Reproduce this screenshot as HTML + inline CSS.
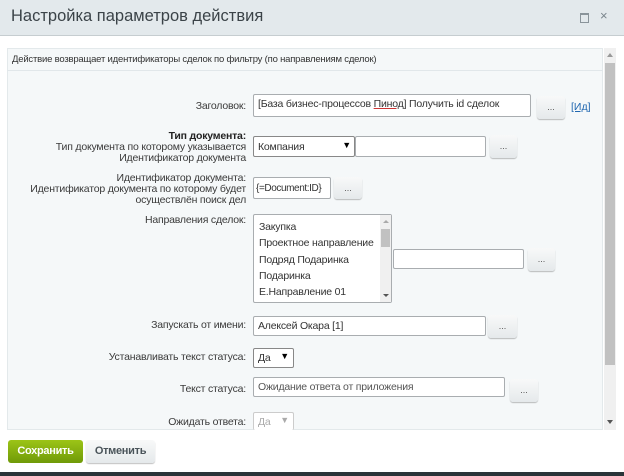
<!DOCTYPE html><html><head><meta charset="utf-8"><style>
body{margin:0;width:624px;height:476px;position:relative;overflow:hidden;background:#fff;font-family:"Liberation Sans",sans-serif;color:#333}
.a{position:absolute}
.lbl{position:absolute;right:378px;text-align:right;font-size:10.5px;color:#3a3a3a;line-height:11px;white-space:nowrap;letter-spacing:-0.2px}
.in{position:absolute;background:#fff;border:1px solid #a9adb0;border-radius:2px;box-sizing:border-box;font-size:10.5px;padding:3px 4px;color:#333;white-space:nowrap;overflow:hidden;letter-spacing:-0.2px}
.btn{position:absolute;box-sizing:border-box;border-radius:3px;background:linear-gradient(#f8f9f9,#e5e9eb);box-shadow:0 1px 1px rgba(0,0,0,.25);font-size:9px;color:#555;text-align:center;line-height:18px}
</style></head><body>
<div class="a" style="left:0;top:0;width:624px;height:35px;background:#e3e9ec;border-bottom:1px solid #c6cdd0"></div>
<div class="a" style="left:11px;top:7px;font-size:16.5px;color:#3b4348">Настройка параметров действия</div>
<div class="a" style="left:580px;top:13px;width:7px;height:7px;border:1px solid #8a949a;border-top-width:2px"></div>
<div class="a" style="left:600px;top:8px;font-size:13px;color:#7a858c">×</div>
<div class="a" style="left:7px;top:48px;width:596px;height:382px;background:#f5f8f9;border:1px solid #e3e9eb;box-sizing:border-box"></div>
<div class="a" style="left:7px;top:70px;width:596px;height:1px;background:#e1e7ea"></div>
<div class="a" style="left:12px;top:54px;font-size:9.5px;color:#333;letter-spacing:-0.2px">Действие возвращает идентификаторы сделок по фильтру (по направлениям сделок)</div>
<div class="a" style="left:604px;top:48px;width:12px;height:382px;background:#f0f0f0"></div>
<div class="a" style="left:607px;top:53px;width:0;height:0;border:3px solid transparent;border-bottom:4px solid #999;border-top:0"></div>
<div class="a" style="left:605px;top:63px;width:10px;height:302px;background:#c1c1c1"></div>
<div class="a" style="left:607px;top:420px;border:3px solid transparent;border-top:4px solid #555;border-bottom:0"></div>

<div class="lbl" style="top:101px">Заголовок:</div>
<div class="in" style="left:253px;top:94px;width:278px;height:23px">[База бизнес-процессов <u style="text-decoration-color:#c33">Пинод</u>] Получить id сделок</div>
<div class="btn" style="left:537px;top:96px;width:28px;height:23px;line-height:23px">...</div>
<div class="a" style="left:571px;top:101px;font-size:10.5px;color:#2067b0;text-decoration:underline">[Ид]</div>

<div class="lbl" style="top:131px;font-weight:bold;color:#222">Тип документа:</div>
<div class="lbl" style="top:142px">Тип документа по которому указывается</div>
<div class="lbl" style="top:153px">Идентификатор документа</div>
<div class="in" style="left:253px;top:136px;width:102px;height:21px;border-color:#888;padding-top:4px">Компания<span style="position:absolute;right:3px;top:3px;font-size:9px;color:#000">▼</span></div>
<div class="in" style="left:355px;top:136px;width:131px;height:21px"></div>
<div class="btn" style="left:490px;top:135px;width:27px;height:23px;line-height:23px">...</div>

<div class="lbl" style="top:173px">Идентификатор документа:</div>
<div class="lbl" style="top:184px">Идентификатор документа по которому будет</div>
<div class="lbl" style="top:195px">осуществлён поиск дел</div>
<div class="in" style="left:253px;top:177px;width:78px;height:22px;padding:5px 2px;font-size:10px;letter-spacing:-0.4px">{=Document:ID}</div>
<div class="btn" style="left:334px;top:177px;width:28px;height:22px;line-height:22px">...</div>

<div class="lbl" style="top:215px">Направления сделок:</div>
<div class="in" style="left:253px;top:214px;width:139px;height:89px;padding:4px 5px;line-height:16.3px">Закупка<br>Проектное направление<br>Подряд Подаринка<br>Подаринка<br>Е.Направление 01</div>
<div class="a" style="left:380px;top:215px;width:11px;height:87px;background:#f0f0f0"></div>
<div class="a" style="left:381px;top:229px;width:9px;height:18px;background:#c1c1c1"></div>
<div class="a" style="left:383px;top:220px;border:3px solid transparent;border-bottom:3px solid #aaa;border-top:0"></div>
<div class="a" style="left:383px;top:294px;border:3px solid transparent;border-top:3px solid #555;border-bottom:0"></div>
<div class="in" style="left:393px;top:249px;width:131px;height:20px"></div>
<div class="btn" style="left:528px;top:248px;width:27px;height:23px;line-height:23px">...</div>

<div class="lbl" style="top:320px">Запускать от имени:</div>
<div class="in" style="left:253px;top:316px;width:233px;height:20px">Алексей Окара [1]</div>
<div class="btn" style="left:488px;top:315px;width:29px;height:23px;line-height:23px">...</div>

<div class="lbl" style="top:352px">Устанавливать текст статуса:</div>
<div class="in" style="left:253px;top:348px;width:41px;height:20px;border-color:#888">Да<span style="position:absolute;right:4px;top:2px;font-size:9px;color:#000">▼</span></div>

<div class="lbl" style="top:384px">Текст статуса:</div>
<div class="in" style="left:253px;top:377px;width:252px;height:20px;color:#555">Ожидание ответа от приложения</div>
<div class="btn" style="left:510px;top:379px;width:28px;height:23px;line-height:23px">...</div>

<div class="lbl" style="top:417px">Ожидать ответа:</div>
<div class="in" style="left:253px;top:412px;width:41px;height:18px;border-color:#ccc;border-bottom:none;color:#aaa">Да<span style="position:absolute;right:4px;top:2px;font-size:9px">▼</span></div>

<div class="a" style="left:8px;top:440px;width:75px;height:23px;border-radius:3px;background:linear-gradient(#9cc417,#6f9a08);color:#fff;font-weight:bold;font-size:11px;text-align:center;line-height:23px;letter-spacing:-0.3px">Сохранить</div>
<div class="btn" style="left:86px;top:440px;width:69px;height:23px;line-height:23px;font-size:11px;font-weight:bold;color:#4a545a;letter-spacing:-0.3px">Отменить</div>
<div class="a" style="left:0;top:472px;width:624px;height:4px;background:#2a3439"></div>
</body></html>
